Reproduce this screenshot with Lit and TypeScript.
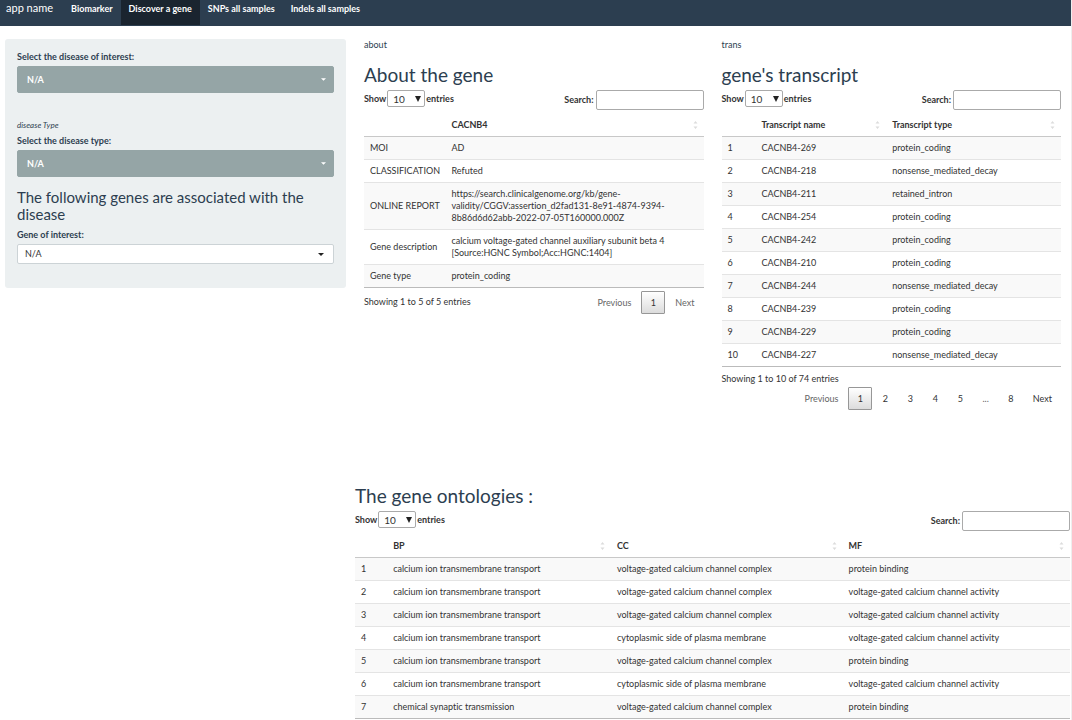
import { LitElement, html, css, svg } from "lit";
import { customElement, property } from "lit/decorators.js";

const shared = css`
  * {
    box-sizing: border-box;
  }
  h2,
  h3,
  p {
    margin: 0;
    font-weight: 400;
  }
  button,
  input,
  select {
    font: inherit;
    color: inherit;
    margin: 0;
  }
  select {
    appearance: none;
    cursor: pointer;
  }
`;

interface Column {
  title: string;
  width: string;
}

@customElement("data-table")
export class DataTable extends LitElement {
  @property({ attribute: false }) columns: Column[] = [];
  @property({ attribute: false }) rows: string[][] = [];
  @property() info = "";
  @property({ attribute: false }) pages: string[] = [];
  @property({ type: Boolean, reflect: true }) stacked = false;

  static styles = [
    shared,
    css`
      :host {
        display: block;
        color: #333;
      }
      .controls {
        display: flex;
        justify-content: space-between;
        align-items: flex-start;
        font-weight: 700;
      }
      .length,
      .search {
        display: flex;
        align-items: center;
        gap: 2px;
      }
      .length {
        gap: 1px;
      }
      .picker {
        display: grid;
        align-items: center;
        font-weight: 400;
      }
      .picker > * {
        grid-area: 1 / 1;
      }
      .picker select {
        width: 38px;
        height: 17px;
        padding: 0 5px;
        border: 1px solid #aaa;
        border-radius: 2px;
        background: #fff;
        font-size: 10px;
        line-height: 12px;
      }
      .picker svg {
        justify-self: end;
        margin-right: 4px;
        pointer-events: none;
      }
      .search input {
        width: 108px;
        height: 20px;
        padding: 3px;
        border: 1px solid #aaa;
        border-radius: 2px;
        background: #fff;
        font-weight: 400;
      }
      table {
        width: 100%;
        table-layout: fixed;
        border-collapse: separate;
        border-spacing: 0;
        border-bottom: 1px solid #bbb;
      }
      th,
      td {
        padding: 5px 6px;
        text-align: left;
        vertical-align: middle;
      }
      th {
        padding: 9px 6px 5px;
        border-bottom: 1px solid #c8c8c8;
        font-weight: 700;
      }
      td {
        border-top: 1px solid #e4e4e4;
      }
      td:first-child {
        white-space: nowrap;
      }
      tbody tr:first-child td {
        border-top: none;
      }
      tbody tr:nth-child(odd) {
        background: #f9f9f9;
      }
      .head {
        display: flex;
        justify-content: space-between;
        align-items: center;
      }
      .footer {
        display: flex;
        justify-content: space-between;
        align-items: flex-start;
        padding-top: 3px;
      }
      .info {
        padding-top: 5px;
      }
      :host([stacked]) .footer {
        flex-direction: column;
        padding-top: 2px;
      }
      :host([stacked]) .info {
        padding-top: 4px;
      }
      :host([stacked]) .paging {
        align-self: flex-end;
        padding-top: 2px;
      }
      .paging {
        display: flex;
        gap: 1px;
      }
      .paging button,
      .dots {
        min-width: 24px;
        height: 23px;
        padding: 0 8px;
        border: 1px solid transparent;
        border-radius: 1px;
        background: none;
        line-height: 21px;
        text-align: center;
        cursor: pointer;
      }
      .paging .dots,
      .paging .disabled {
        color: #666;
      }
      .paging .active {
        border-color: #979797;
        background: linear-gradient(#fff, #dcdcdc);
      }
    `,
  ];

  private page(p: string) {
    if (p === "…") return html`<span class="dots">...</span>`;
    return html`<button type="button" class=${p === "1" ? "active" : ""}>${p}</button>`;
  }

  render() {
    return html`
      <div class="controls">
        <label class="length">
          Show
          <span class="picker">
            <select>
              <option>10</option>
              <option>25</option>
              <option>50</option>
              <option>100</option>
            </select>
            <svg width="6" height="6" viewBox="0 0 6 6"><path d="M0 0h6L3 6z" fill="#222" /></svg>
          </span>
          entries
        </label>
        <label class="search">Search:<input type="search" /></label>
      </div>
      <table>
        <colgroup>
          ${this.columns.map((c) => html`<col style="width:${c.width}" />`)}
        </colgroup>
        <thead>
          <tr>
            ${this.columns.map((c) =>
              c.title
                ? html`<th scope="col">
                    <div class="head">
                      ${c.title}
                      <svg width="5" height="8" viewBox="0 0 5 8">
                        ${svg`<path d="M.5 2.500L2.500 0l2 2.500zM.5 5.500L2.500 8l2-2.500z" fill="#dcdcdc" />`}
                      </svg>
                    </div>
                  </th>`
                : html`<th></th>`
            )}
          </tr>
        </thead>
        <tbody>
          ${this.rows.map((r) => html`<tr>${r.map((c) => html`<td>${c}</td>`)}</tr>`)}
        </tbody>
      </table>
      ${this.info
        ? html`<div class="footer">
            <div class="info">${this.info}</div>
            <div class="paging">
              <button type="button" class="disabled">Previous</button>
              ${this.pages.map((p) => this.page(p))}
              <button type="button" class=${this.pages.length > 1 ? "" : "disabled"}>Next</button>
            </div>
          </div>`
        : ""}
    `;
  }
}

const ABOUT_COLUMNS: Column[] = [
  { title: "", width: "24%" },
  { title: "CACNB4", width: "76%" },
];
const ABOUT_ROWS = [
  ["MOI", "AD"],
  ["CLASSIFICATION", "Refuted"],
  [
    "ONLINE REPORT",
    "https://search.clinicalgenome.org/kb/gene-validity/CGGV:assertion_d2fad131-8e91-4874-9394-8b86d6d62abb-2022-07-05T160000.000Z",
  ],
  ["Gene description", "calcium voltage-gated channel auxiliary subunit beta 4 [Source:HGNC Symbol;Acc:HGNC:1404]"],
  ["Gene type", "protein_coding"],
];

const TRANSCRIPT_COLUMNS: Column[] = [
  { title: "", width: "10%" },
  { title: "Transcript name", width: "38.5%" },
  { title: "Transcript type", width: "51.5%" },
];
const TRANSCRIPT_ROWS = [
  ["CACNB4-269", "protein_coding"],
  ["CACNB4-218", "nonsense_mediated_decay"],
  ["CACNB4-211", "retained_intron"],
  ["CACNB4-254", "protein_coding"],
  ["CACNB4-242", "protein_coding"],
  ["CACNB4-210", "protein_coding"],
  ["CACNB4-244", "nonsense_mediated_decay"],
  ["CACNB4-239", "protein_coding"],
  ["CACNB4-229", "protein_coding"],
  ["CACNB4-227", "nonsense_mediated_decay"],
].map((r, i) => [String(i + 1), ...r]);

const ONTOLOGY_COLUMNS: Column[] = [
  { title: "", width: "4.5%" },
  { title: "BP", width: "31.3%" },
  { title: "CC", width: "32.4%" },
  { title: "MF", width: "31.8%" },
];
const TRANSPORT = "calcium ion transmembrane transport";
const COMPLEX = "voltage-gated calcium channel complex";
const MEMBRANE = "cytoplasmic side of plasma membrane";
const ACTIVITY = "voltage-gated calcium channel activity";
const BINDING = "protein binding";
const ONTOLOGY_ROWS = [
  [TRANSPORT, COMPLEX, BINDING],
  [TRANSPORT, COMPLEX, ACTIVITY],
  [TRANSPORT, COMPLEX, ACTIVITY],
  [TRANSPORT, MEMBRANE, ACTIVITY],
  [TRANSPORT, COMPLEX, BINDING],
  [TRANSPORT, MEMBRANE, ACTIVITY],
  ["chemical synaptic transmission", COMPLEX, BINDING],
].map((r, i) => [String(i + 1), ...r]);

@customElement("app-root")
export class AppRoot extends LitElement {
  static styles = [
    shared,
    css`
      :host {
        display: block;
        box-sizing: border-box;
        min-height: 100vh;
        border-right: 1px solid #eee;
        background: #fff;
        color: #2c3e50;
        font: 9px/12px Lato, "Liberation Sans", sans-serif;
        font-variant-ligatures: none;
      }
      nav {
        display: flex;
        height: 26px;
        border-bottom: 1px solid #2c3e50;
        background: #2c3e50;
        color: #fff;
      }
      nav a {
        padding: 3px 8px 10px;
        color: inherit;
        text-decoration: none;
        font-weight: 700;
      }
      nav .brand {
        padding: 2px 10px 0 6px;
        font-size: 11px;
        font-weight: 400;
      }
      nav .current {
        background: #1a242f;
      }
      .page {
        display: grid;
        grid-template-columns: 341fr 715fr;
        gap: 9px;
        align-items: start;
        padding: 13px 1px 0 5px;
      }
      .sidebar {
        display: flex;
        flex-direction: column;
        padding: 12px 12px 24px;
        border-radius: 3px;
        background: #ecf0f1;
      }
      .sidebar label {
        margin-bottom: 3px;
        font-weight: 700;
      }
      .sidebar h3 {
        margin: 12px 0 6px;
        font-size: 15px;
        line-height: 17px;
      }
      .note {
        margin: 26px 0 4px;
        font-size: 8px;
        font-style: italic;
      }
      .drop {
        display: grid;
        align-items: center;
      }
      .drop > * {
        grid-area: 1 / 1;
      }
      .drop select {
        width: 100%;
        height: 27px;
        padding: 0 9px;
        border: 1px solid #95a5a6;
        border-radius: 2px;
        background: #95a5a6;
        color: #fff;
        font-weight: 700;
      }
      .drop svg {
        justify-self: end;
        margin-right: 8px;
        color: #fff;
        pointer-events: none;
      }
      .drop.light select {
        height: 20px;
        padding: 0 7px;
        border-color: #ccd3d6;
        background: #fff;
        color: #333;
        font-weight: 400;
      }
      .drop.light svg {
        margin-right: 10px;
        color: #222;
      }
      .panels {
        display: grid;
        grid-template-columns: 1fr 1fr;
        gap: 18px;
        padding: 0 9px;
      }
      h2 {
        font-size: 19px;
        line-height: 22px;
      }
      .panels h2 {
        margin: 13px 0 4px;
      }
      .ontologies {
        margin-top: 75px;
      }
      .ontologies h2 {
        margin-bottom: 4px;
      }
    `,
  ];

  private drop(id: string, label: string, light = false) {
    return html`
      <label for=${id}>${label}</label>
      <div class="drop ${light ? "light" : ""}">
        <select id=${id}><option>N/A</option></select>
        <svg width=${light ? 6 : 5} height="3" viewBox="0 0 6 3"><path d="M0 0h6L3 3z" fill="currentColor" /></svg>
      </div>
    `;
  }

  render() {
    return html`
      <nav>
        <a class="brand" href="#">app name</a>
        <a href="#biomarker">Biomarker</a>
        <a class="current" href="#gene" aria-current="page">Discover a gene</a>
        <a href="#snps">SNPs all samples</a>
        <a href="#indels">Indels all samples</a>
      </nav>
      <div class="page">
        <form class="sidebar">
          ${this.drop("disease", "Select the disease of interest:")}
          <p class="note">disease Type</p>
          ${this.drop("type", "Select the disease type:")}
          <h3>The following genes are associated with the disease</h3>
          ${this.drop("gene", "Gene of interest:", true)}
        </form>
        <main>
          <div class="panels">
            <section>
              <p>about</p>
              <h2>About the gene</h2>
              <data-table
                .columns=${ABOUT_COLUMNS}
                .rows=${ABOUT_ROWS}
                info="Showing 1 to 5 of 5 entries"
                .pages=${["1"]}
              ></data-table>
            </section>
            <section>
              <p>trans</p>
              <h2>gene's transcript</h2>
              <data-table
                stacked
                .columns=${TRANSCRIPT_COLUMNS}
                .rows=${TRANSCRIPT_ROWS}
                info="Showing 1 to 10 of 74 entries"
                .pages=${["1", "2", "3", "4", "5", "…", "8"]}
              ></data-table>
            </section>
          </div>
          <section class="ontologies">
            <h2>The gene ontologies :</h2>
            <data-table .columns=${ONTOLOGY_COLUMNS} .rows=${ONTOLOGY_ROWS}></data-table>
          </section>
        </main>
      </div>
    `;
  }
}
